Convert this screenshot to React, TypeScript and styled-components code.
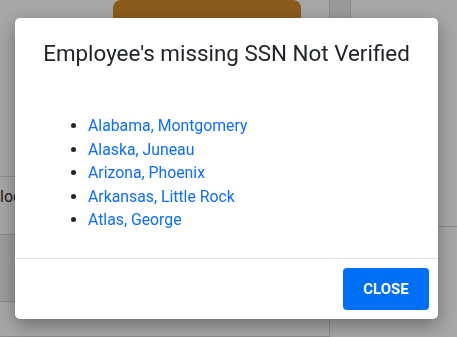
import React from 'react'
import styled, {createGlobalStyle} from 'styled-components'

const GlobalStyle = createGlobalStyle`
  html, body {
    margin: 0;
    padding: 0;
    width: 457px;
    height: 337px;
    overflow: hidden;
    background: #ffffff;
    font-family: Roboto, "Liberation Sans", sans-serif;
  }
`

const Page = styled.div`
  width: 457px;
  height: 337px;
  display: grid;
  grid-template-columns: 330px 21px 1fr;
  background: #ffffff;
`

const MainColumn = styled.div`
  display: flex;
  flex-direction: column;
  border-right: 1px solid #d6d6d6;
`

const Toolbar = styled.div`
  height: 177px;
  display: flex;
  align-items: flex-start;
  padding-left: 113px;
  box-sizing: border-box;
  border-bottom: 1px solid #dcdcdc;
`

const ActionButton = styled.div`
  width: 188px;
  height: 44px;
  background: #d58b28;
  border-radius: 8px;
`

const Row = styled.div<{ height: number; shaded?: boolean }>`
  height: ${p => p.height}px;
  display: flex;
  align-items: flex-start;
  box-sizing: border-box;
  padding-top: 10px;
  border-bottom: 1px solid #d4d4d4;
  background: ${p => p.shaded ? '#f0f0f0' : '#ffffff'};
  font-size: 16px;
  line-height: 20px;
  color: #333;
`

const NarrowColumn = styled.div`
  display: flex;
  flex-direction: column;
`

const NarrowCell = styled.div`
  height: 60px;
  background: #ececec;
  border-right: 1px solid #d6d6d6;
`

const SideColumn = styled.div`
  display: flex;
  flex-direction: column;
`

const SideCell = styled.div`
  height: 226px;
  border-bottom: 1px solid #d6d6d6;
`

const Overlay = styled.div`
  position: fixed;
  inset: 0;
  background: rgba(0, 0, 0, 0.35);
  display: flex;
  align-items: flex-start;
`

const Modal = styled.div`
  margin: 18px 0 0 15px;
  width: 423px;
  height: 301px;
  background: #ffffff;
  border-radius: 5px;
  box-shadow: 0 6px 18px rgba(0, 0, 0, 0.35);
  display: flex;
  flex-direction: column;
  box-sizing: border-box;
`

const Body = styled.div`
  flex: 1;
  padding: 22px 0 0 33px;
  box-sizing: border-box;
`

const Title = styled.h2`
  margin: 0 0 0 -33px;
  font-size: 22.4px;
  line-height: 26.4px;
  font-weight: 400;
  color: #212529;
  text-align: center;
`

const StateList = styled.ul`
  margin: 48px 0 0;
  padding-left: 40px;
  list-style: disc;
  color: #212529;
  font-size: 15.8px;
  line-height: 23.5px;
`

const StateItem = styled.li`
  color: #212529;

  a {
    color: #0d6efd;
    text-decoration: none;
  }
`

const Footer = styled.div`
  height: 61px;
  border-top: 1px solid #dee2e6;
  display: flex;
  justify-content: flex-end;
  align-items: flex-start;
  padding: 9px 9px 0 0;
  box-sizing: border-box;
`

const CloseButton = styled.button`
  width: 86px;
  height: 42px;
  border: none;
  border-radius: 4px;
  background: #006ff8;
  color: #ffffff;
  font-family: Roboto, "Liberation Sans", sans-serif;
  font-size: 15px;
  font-weight: 700;
  text-transform: uppercase;
  cursor: pointer;
`

const states = [
    'Alabama, Montgomery',
    'Alaska, Juneau',
    'Arizona, Phoenix',
    'Arkansas, Little Rock',
    'Atlas, George',
]

const App: React.FC = () => {
    return (
        <>
            <GlobalStyle/>
            <Page>
                <MainColumn>
                    <Toolbar>
                        <ActionButton/>
                    </Toolbar>
                    <Row height={58}>lock</Row>
                    <Row height={67} shaded/>
                    <Row height={35}/>
                </MainColumn>
                <NarrowColumn>
                    <NarrowCell/>
                </NarrowColumn>
                <SideColumn>
                    <SideCell/>
                </SideColumn>
            </Page>
            <Overlay>
                <Modal>
                    <Body>
                        <Title>Employee's missing SSN Not Verified</Title>
                        <StateList>
                            {states.map(s => (
                                <StateItem key={s}><a href="#">{s}</a></StateItem>
                            ))}
                        </StateList>
                    </Body>
                    <Footer>
                        <CloseButton>Close</CloseButton>
                    </Footer>
                </Modal>
            </Overlay>
        </>
    )
}

export default App
